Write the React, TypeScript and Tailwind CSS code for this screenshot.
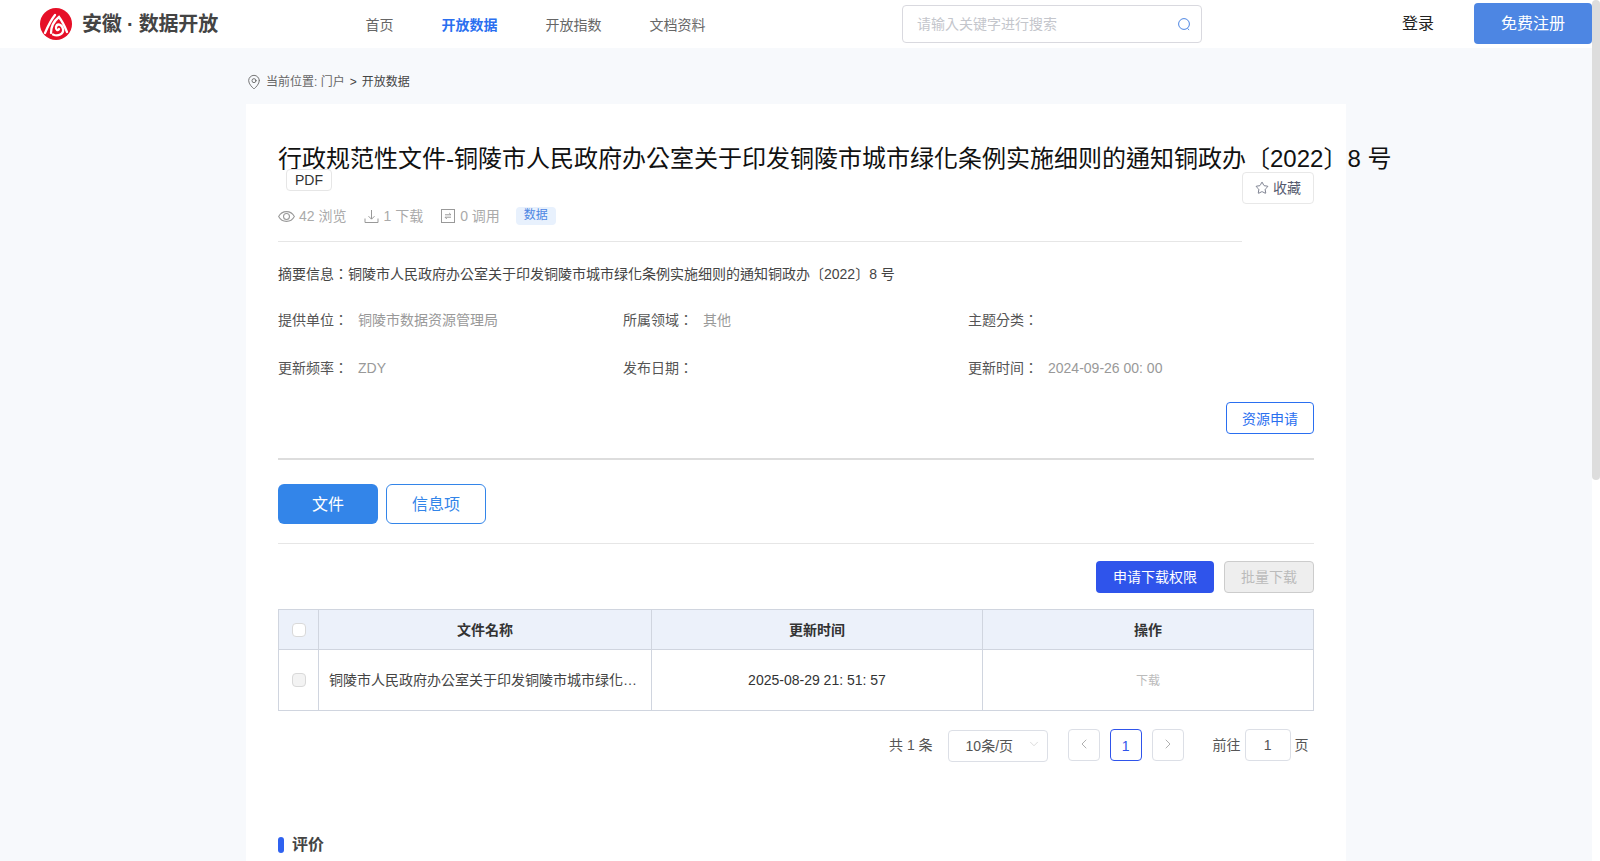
import { ChevronDown, ChevronLeft, ChevronRight, MapPin, Star } from "lucide-react";

const font = "font-['Liberation_Sans','Noto_Sans_CJK_TC',sans-serif]";

function Logo() {
  return (
    <svg width="32" height="32" viewBox="0 0 32 32" fill="none">
      <circle cx="16" cy="16" r="16" fill="#e60f27" />
      <g stroke="#fff" strokeWidth="2.3" strokeLinecap="round" fill="none">
        <path d="M5 25 C8 18 11 12 15 7" />
        <path d="M11 25 C11 19 14 13 19 9 C22 13 25 19 27 24" />
        <path d="M13 26.5 C18 29 24 26 23 21 C22 16 17 15 16 19 C15.5 22 18 23 19 21" />
      </g>
    </svg>
  );
}

function EyeIcon() {
  return (
    <svg width="17" height="17" viewBox="0 0 16 16" fill="none" stroke="#999" strokeWidth="1">
      <path d="M.6 8C2.2 5 5 3.4 8 3.4S13.8 5 15.4 8C13.8 11 11 12.6 8 12.6S2.2 11 .6 8Z" />
      <circle cx="8" cy="8" r="2.8" />
    </svg>
  );
}

function DownIcon() {
  return (
    <svg width="15" height="15" viewBox="0 0 15 15" fill="none" stroke="#999" strokeWidth="1">
      <path d="M7.5 1v9M4.5 7.2l3 3 3-3M1 9.5v4h13v-4" />
    </svg>
  );
}

function CallIcon() {
  return (
    <svg width="14" height="14" viewBox="0 0 14 14" fill="none" stroke="#999" strokeWidth="1">
      <rect x=".5" y=".5" width="13" height="13" />
      <path d="M4 5.8h6L8.2 4M10 8.2H4L5.8 10" />
    </svg>
  );
}

function SearchIcon() {
  return (
    <svg width="14" height="14" viewBox="0 0 14 14" fill="none" stroke="#4d86e3" strokeWidth="1">
      <circle cx="7" cy="7" r="5.4" />
      <path d="M10.5 11.5l1.6 1.4" />
    </svg>
  );
}

function Field({ label, value }: { label: string; value?: string }) {
  return (
    <div className="flex h-[22px] items-center text-sm">
      <span className="w-[80px] text-[#555]">{label}</span>
      <span className="text-[#999]">{value}</span>
    </div>
  );
}

export default function App() {
  return (
    <div className={`flex h-screen overflow-hidden bg-[#f7f9fc] ${font}`}>
      <div className="min-w-0 flex-1">
        {/* Header */}
        <header className="flex h-12 items-start bg-white">
          <div className="ml-10 mt-2 flex items-center">
            <Logo />
            <span className="ml-[10px] w-[136px] whitespace-nowrap text-xl font-bold tracking-[-0.2px] text-[#444]">安徽 · 数据开放</span>
          </div>
          <nav className="ml-[147.5px] mt-4 flex gap-12 text-sm leading-[18px] text-[#666]">
            <a>首页</a>
            <a className="font-bold text-[#2a6ff0]">开放数据</a>
            <a>开放指数</a>
            <a>文档资料</a>
          </nav>
          <div className="ml-[196.5px] mt-[5px] flex h-[38px] w-[300px] items-center justify-between rounded border border-[#d9d9df] pl-[14px] pr-[10px] text-sm text-[#c4c6cc]">
            <span>请输入关键字进行搜索</span>
            <SearchIcon />
          </div>
          <span className="ml-[200px] mt-3 text-base leading-6 text-[#222]">登录</span>
          <button className="ml-10 mt-[3px] h-[41px] w-[118px] rounded bg-[#4d86e3] text-base text-white">免费注册</button>
        </header>

        {/* Breadcrumb */}
        <div className="mx-auto flex h-14 w-[1100px] items-center pt-3 text-xs text-[#666]">
          <MapPin className="mr-[4px] h-4 w-4 text-[#555]" strokeWidth={1.2} />
          <span>当前位置: 门户</span>
          <span className="mx-[5px] text-[#444]">&gt;</span>
          <span className="text-[#444]">开放数据</span>
        </div>

        <main className="mx-auto w-[1100px] bg-white px-8 pt-[37px]">
          <div className="flex items-start">
            <div className="w-[964px] shrink-0 border-b border-[#e6e6e6] pb-[13px]">
              <h1 className="whitespace-nowrap text-2xl leading-9 text-[#111]">行政规范性文件-铜陵市人民政府办公室关于印发铜陵市城市绿化条例实施细则的通知铜政办〔2022〕8 号</h1>
              <span className="relative ml-2 -mt-2 block h-[22px] w-[46px] rounded-sm border border-[#e6e6e6] bg-white text-center text-sm leading-5 text-[#333]">PDF</span>
              <div className="mt-[13px] flex h-6 items-center text-sm text-[#aaa]">
                <EyeIcon />
                <span className="ml-1">42 浏览</span>
                <span className="ml-[18px]"><DownIcon /></span>
                <span className="ml-1">1 下载</span>
                <span className="ml-[18px]"><CallIcon /></span>
                <span className="ml-[5px]">0 调用</span>
                <span className="ml-4 h-[18px] rounded-sm bg-[#e8f1fd] px-2 text-xs leading-[17px] text-[#4d86e3]">数据</span>
              </div>
            </div>
            <button className="mt-[31px] flex h-8 w-[72px] items-center justify-center gap-1 rounded-sm border border-[#e8e8e8] text-sm text-[#555a6e]">
              <Star className="h-[14px] w-[14px]" strokeWidth={1.3} />
              收藏
            </button>
          </div>

          <p className="mt-[21px] text-sm leading-[22px] text-[#444]">摘要信息：铜陵市人民政府办公室关于印发铜陵市城市绿化条例实施细则的通知铜政办〔2022〕8 号</p>

          <div className="mt-6 grid grid-cols-[345px_345px_346px] gap-y-[26px]">
            <Field label="提供单位：" value="铜陵市数据资源管理局" />
            <Field label="所属领域：" value="其他" />
            <Field label="主题分类：" />
            <Field label="更新频率：" value="ZDY" />
            <Field label="发布日期：" />
            <Field label="更新时间：" value="2024-09-26 00: 00" />
          </div>

          <div className="mt-[23px] flex justify-end">
            <button className="h-8 w-[88px] rounded-sm border border-[#2a6ff0] pt-px text-sm text-[#2a6ff0]">资源申请</button>
          </div>

          <div className="mt-6 h-0.5 bg-[#ddd]" />

          <div className="mt-6 flex gap-2">
            <button className="h-10 w-[100px] rounded-md bg-[#3385e9] pt-px text-base text-white">文件</button>
            <button className="h-10 w-[100px] rounded-md border border-[#3385e9] pt-px text-base text-[#3385e9]">信息项</button>
          </div>

          <div className="mt-[19px] h-px bg-[#e6e6e6]" />

          <div className="mt-[17px] flex justify-end gap-2.5">
            <button className="h-8 w-[118px] rounded bg-[#2f54eb] text-sm text-white">申请下载权限</button>
            <button className="h-8 w-[90px] rounded border border-[#ccc] bg-[#eee] text-sm text-[#bbb]">批量下载</button>
          </div>

          <table className="mt-4 w-[1035px] table-fixed border-collapse text-sm">
            <colgroup>
              <col className="w-10" />
              <col className="w-[333px]" />
              <col className="w-[331px]" />
              <col className="w-[331px]" />
            </colgroup>
            <thead>
              <tr className="h-10 bg-[#ecf1fa] font-bold text-[#333]">
                <th className="border border-[#d0d5df]">
                  <span className="mx-auto block h-[14px] w-[14px] rounded-sm border border-[#d9d9d9] bg-white" />
                </th>
                <th className="border border-[#d0d5df]">文件名称</th>
                <th className="border border-[#d0d5df]">更新时间</th>
                <th className="border border-[#d0d5df]">操作</th>
              </tr>
            </thead>
            <tbody>
              <tr className="h-[61px] text-[#444]">
                <td className="border border-[#d0d5df]">
                  <span className="mx-auto block h-[14px] w-[14px] rounded-sm border border-[#d9d9d9] bg-[#f3f3f3]" />
                </td>
                <td className="truncate border border-[#d0d5df] px-[10px]">铜陵市人民政府办公室关于印发铜陵市城市绿化条例实施细则的通知</td>
                <td className="border border-[#d0d5df] text-center text-[#333]">2025-08-29 21: 51: 57</td>
                <td className="border border-[#d0d5df] pt-0.5 text-center text-xs text-[#bbb]">下载</td>
              </tr>
            </tbody>
          </table>

          <div className="mt-[18px] flex h-8 items-center text-sm text-[#555]">
            <span className="ml-[611px]">共 1 条</span>
            <div className="ml-[15px] mt-0.5 flex h-8 w-[100px] items-center justify-between rounded border border-[#dcdfe6] pl-[17px] pr-1.5 text-[#555]">
              <span>10条/页</span>
              <ChevronDown className="-mt-1 h-[14px] w-[14px] text-[#ccc]" strokeWidth={1.2} />
            </div>
            <button className="ml-5 flex h-8 w-8 items-center justify-center rounded border border-[#dcdfe6] text-[#aaa]">
              <ChevronLeft className="-mt-0.5 h-4 w-4" strokeWidth={1.4} />
            </button>
            <button className="ml-2.5 h-8 w-8 rounded border border-[#2f54eb] pt-px text-[#2f54eb]">1</button>
            <button className="ml-2.5 flex h-8 w-8 items-center justify-center rounded border border-[#dcdfe6] text-[#aaa]">
              <ChevronRight className="-mt-0.5 h-4 w-4" strokeWidth={1.4} />
            </button>
            <span className="ml-[29px]">前往</span>
            <span className="ml-[4px] h-8 w-[46px] rounded border border-[#dcdfe6] text-center leading-[30px]">1</span>
            <span className="ml-1">页</span>
          </div>

          <div className="mt-[72px] flex h-6 items-center">
            <span className="h-4 w-1.5 rounded-sm bg-[#2f62f0]" />
            <span className="ml-2 text-base font-bold text-[#444]">评价</span>
          </div>
          <div className="h-10" />
        </main>
      </div>

      {/* Scrollbar */}
      <div className="w-2 shrink-0 bg-white">
        <div className="h-[480px] rounded-sm bg-[#ddd]" />
      </div>
    </div>
  );
}
